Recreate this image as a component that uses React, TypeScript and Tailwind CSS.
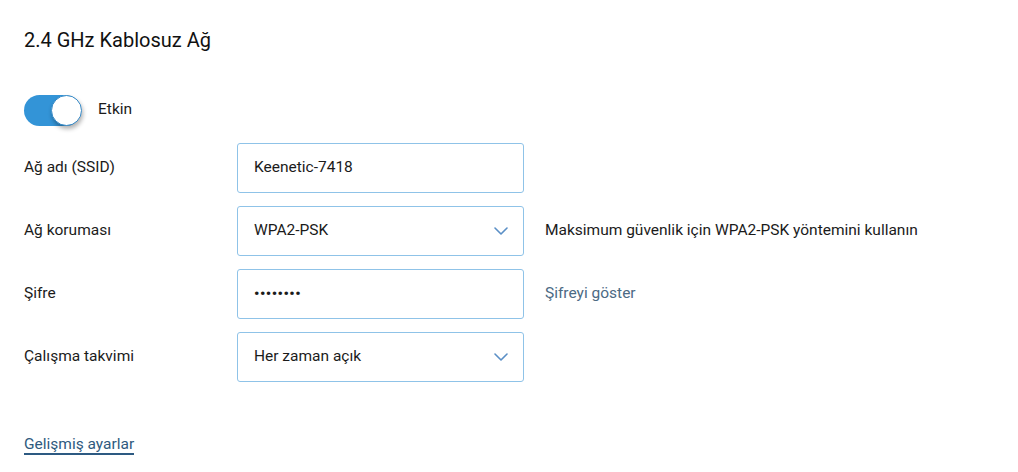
import { useState } from 'react'

function Chevron() {
  return (
    <svg width="14" height="8" viewBox="0 0 14 8" fill="none" className="shrink-0">
      <path d="M1 1l6 6 6-6" stroke="#5a8fc6" strokeWidth="1.6" strokeLinecap="round" strokeLinejoin="round" />
    </svg>
  )
}

function Row({ label, children, hint }: { label: string; children: React.ReactNode; hint?: React.ReactNode }) {
  return (
    <div className="flex items-center h-[50px]">
      <div className="w-[213px] text-[15.5px] text-[#1b1b1b]">{label}</div>
      <div className="w-[287px] h-[50px] border border-[#8fc3e8] rounded-[3px] bg-white flex items-center pl-[16px] pr-[15px] text-[15.5px] text-[#1b1b1b]">
        {children}
      </div>
      {hint && <div className="ml-[21px] text-[15.5px]">{hint}</div>}
    </div>
  )
}

export default function App() {
  const [on, setOn] = useState(true)

  return (
    <div className="w-[1018px] h-[472px] bg-white pl-[24px] pt-[26px] font-['Roboto',sans-serif]">
      <h1 className="text-[20px] leading-[28px] text-[#111]">2.4 GHz Kablosuz Ağ</h1>

      <div className="mt-[40px] flex items-center h-[32px]">
        <button
          onClick={() => setOn(!on)}
          className="relative w-[57px] h-[31px] rounded-full bg-[#3394d7]"
        >
          <span className="absolute right-[-1px] top-[0px] w-[31px] h-[31px] rounded-full bg-white border border-[#3a8cc8] shadow-[1px_3px_4px_rgba(0,0,0,0.3)]" />
        </button>
        <span className="ml-[17px] text-[15.5px] text-[#1b1b1b]">Etkin</span>
      </div>

      <div className="mt-[17px] flex flex-col gap-[13px]">
        <Row label="Ağ adı (SSID)">Keenetic-7418</Row>
        <Row
          label="Ağ koruması"
          hint={<span className="text-[#1b1b1b]">Maksimum güvenlik için WPA2-PSK yöntemini kullanın</span>}
        >
          <span className="flex-1">WPA2-PSK</span>
          <Chevron />
        </Row>
        <Row label="Şifre" hint={<span className="text-[#4c6a84]">Şifreyi göster</span>}>
          <span className="tracking-[0.5px] text-[15px] font-bold">••••••••</span>
        </Row>
        <Row label="Çalışma takvimi">
          <span className="flex-1">Her zaman açık</span>
          <Chevron />
        </Row>
      </div>

      <div className="mt-[50px]">
        <a className="inline-block text-[15.5px] leading-[18px] text-[#2f5a7e] border-b-2 border-[#2d5a82]">
          Gelişmiş ayarlar
        </a>
      </div>
    </div>
  )
}
